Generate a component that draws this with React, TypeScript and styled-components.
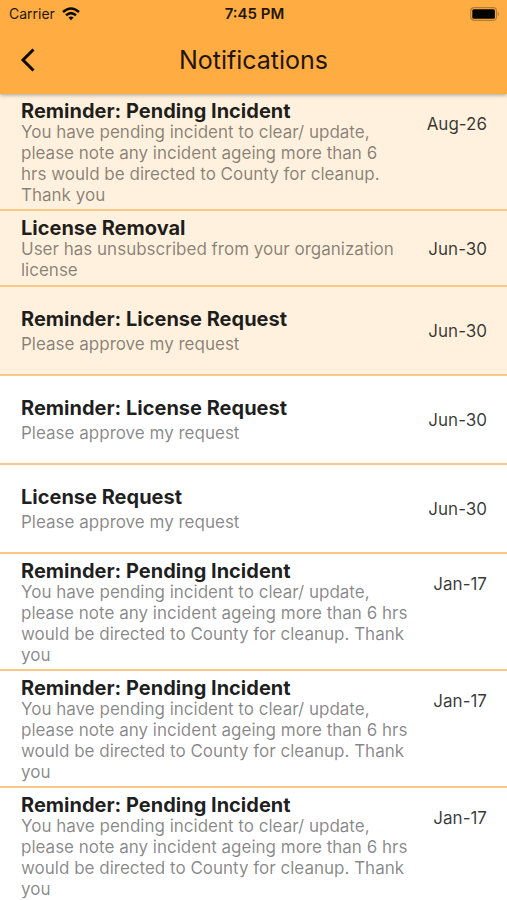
import React from "react";
import styled, { createGlobalStyle } from "styled-components";

const GlobalStyle = createGlobalStyle`
  * { box-sizing: border-box; }
  body { margin: 0; background: #ffffff; font-family: Inter, "Liberation Sans", sans-serif; }
`;

const Screen = styled.div`
  height: 100vh;
  display: flex;
  flex-direction: column;
  overflow: hidden;
`;

const Header = styled.header`
  flex: none;
  position: relative;
  background: #ffad42;
  color: #1f1508;
  box-shadow: 0 1px 4px rgba(0, 0, 0, 0.35);
`;

const StatusBar = styled.div`
  display: grid;
  grid-template-columns: 1fr auto 1fr;
  align-items: center;
  height: 27px;
  padding: 0 7px 0 9px;
  font-size: 14px;
`;

const Carrier = styled.span`
  display: flex;
  align-items: center;
  gap: 7px;
`;

const Clock = styled.span`
  font-size: 15px;
  font-weight: 600;
`;

const Battery = styled.svg`
  justify-self: end;
`;

const NavBar = styled.div`
  display: grid;
  grid-template-columns: 56px 1fr 56px;
  align-items: center;
  height: 67px;
  padding-bottom: 2px;
`;

const BackButton = styled.button`
  display: flex;
  align-items: center;
  justify-content: center;
  height: 48px;
  padding: 0;
  border: 0;
  background: none;
  color: #0d0903;
`;

const Title = styled.h1`
  margin: 0;
  text-align: center;
  font-size: 25px;
  font-weight: 400;
`;

const List = styled.ul`
  margin: 0;
  padding: 0;
  list-style: none;
`;

type Layout = "tall" | "medium" | "roomy";

const Item = styled.li<{ $unread: boolean; $layout: Layout }>`
  display: flex;
  justify-content: space-between;
  align-items: ${(p) => (p.$layout === "tall" ? "flex-start" : "center")};
  gap: 22px;
  padding: 6px 20px ${(p) => (p.$layout === "tall" ? "3px" : "4px")} 21px;
  border-bottom: 2px solid #fbc987;
  background: ${(p) => (p.$unread ? "#fff1de" : "#ffffff")};
`;

const Message = styled.div<{ $roomy: boolean }>`
  flex: 1;
  padding: ${(p) => (p.$roomy ? "15px 0" : "0")};
`;

const Subject = styled.h2<{ $roomy: boolean }>`
  margin: 0 0 ${(p) => (p.$roomy ? "4px" : "0")};
  font-size: 20px;
  line-height: 22px;
  font-weight: 700;
  color: rgba(0, 0, 0, 0.88);
`;

const Body = styled.p`
  margin: 0;
  font-size: 17px;
  line-height: 21px;
  color: rgba(0, 0, 0, 0.48);
`;

const Stamp = styled.time<{ $tall: boolean }>`
  flex: none;
  padding-top: ${(p) => (p.$tall ? "14px" : "0")};
  font-size: 17px;
  line-height: 21px;
  color: rgba(0, 0, 0, 0.78);
`;

type Notice = { subject: string; body: string; date: string; unread: boolean; layout: Layout };

const pending = "You have pending incident to clear/ update, please note any incident ageing more than 6 hrs would be directed to County for cleanup. Thank you";
const approve = "Please approve my request";

const notices: Notice[] = [
  { subject: "Reminder: Pending Incident", body: pending, date: "Aug-26", unread: true, layout: "tall" },
  { subject: "License Removal", body: "User has unsubscribed from your organization license", date: "Jun-30", unread: true, layout: "medium" },
  { subject: "Reminder: License Request", body: approve, date: "Jun-30", unread: true, layout: "roomy" },
  { subject: "Reminder: License Request", body: approve, date: "Jun-30", unread: false, layout: "roomy" },
  { subject: "License Request", body: approve, date: "Jun-30", unread: false, layout: "roomy" },
  { subject: "Reminder: Pending Incident", body: pending, date: "Jan-17", unread: false, layout: "tall" },
  { subject: "Reminder: Pending Incident", body: pending, date: "Jan-17", unread: false, layout: "tall" },
  { subject: "Reminder: Pending Incident", body: pending, date: "Jan-17", unread: false, layout: "tall" },
];

export default function App() {
  return (
    <Screen>
      <GlobalStyle />
      <Header>
        <StatusBar>
          <Carrier>
            Carrier
            <svg width="18" height="14" viewBox="0 0 18 14" fill="none" stroke="#0d0903" strokeWidth="2.5" role="img" aria-label="Wi-Fi">
              <path d="M1 5 Q9 -2 17 5M4 8.3 Q9 4 14 8.3" />
              <path d="M6.4 10.5 Q9 8.4 11.6 10.5 L9 13.2Z" fill="#0d0903" stroke="none" />
            </svg>
          </Carrier>
          <Clock>7:45 PM</Clock>
          <Battery width="30" height="14" viewBox="0 0 30 14" role="img" aria-label="Battery full">
            <rect x="0.7" y="0.7" width="25.8" height="12.6" rx="3.5" fill="none" stroke="#b57c33" strokeWidth="1.2" />
            <rect x="2.3" y="2.3" width="22.6" height="9.4" rx="1.5" fill="#050300" />
            <path d="M27.7 4.7 Q30.5 7 27.7 9.3Z" fill="#b57c33" />
          </Battery>
        </StatusBar>
        <NavBar>
          <BackButton type="button" aria-label="Back">
            <svg width="16" height="24" viewBox="0 0 16 24" fill="none" stroke="currentColor" strokeWidth="3">
              <path d="M13.5 1.5 L3 12 L13.5 22.5" />
            </svg>
          </BackButton>
          <Title>Notifications</Title>
        </NavBar>
      </Header>
      <List>
        {notices.map((n, i) => (
          <Item key={i} $unread={n.unread} $layout={n.layout}>
            <Message $roomy={n.layout === "roomy"}>
              <Subject $roomy={n.layout === "roomy"}>{n.subject}</Subject>
              <Body>{n.body}</Body>
            </Message>
            <Stamp $tall={n.layout === "tall"}>{n.date}</Stamp>
          </Item>
        ))}
      </List>
    </Screen>
  );
}
